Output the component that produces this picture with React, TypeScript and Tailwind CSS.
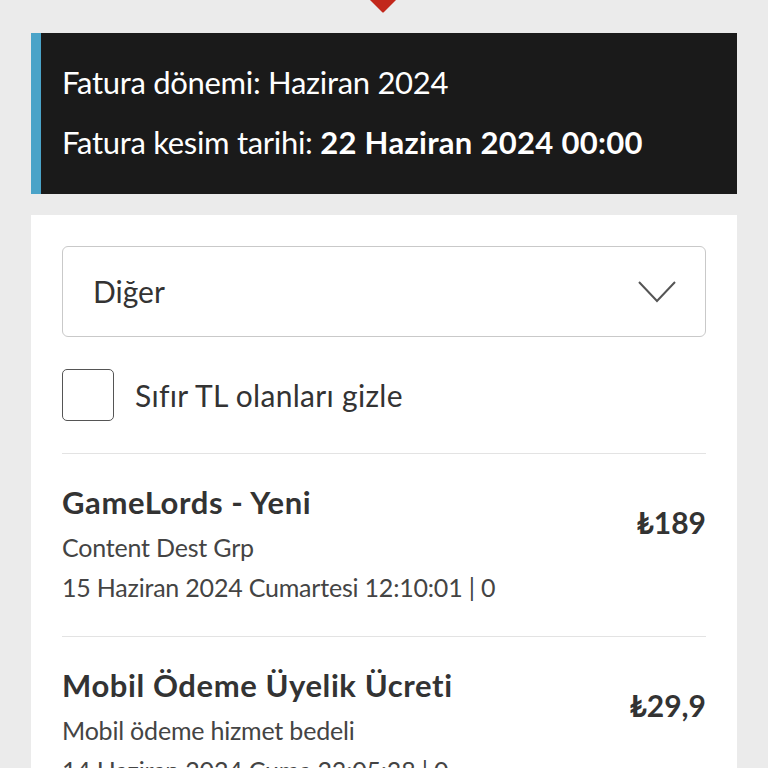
const items = [
  {
    title: "GameLords - Yeni",
    vendor: "Content Dest Grp",
    date: "15 Haziran 2024 Cumartesi 12:10:01 | 0",
    price: "₺189",
  },
  {
    title: "Mobil Ödeme Üyelik Ücreti",
    vendor: "Mobil ödeme hizmet bedeli",
    date: "14 Haziran 2024 Cuma 23:05:38 | 0",
    price: "₺29,9",
  },
];

function Chevron() {
  return (
    <svg width="38" height="22" viewBox="0 0 38 22" fill="none">
      <path d="M1 1 L19 20 L37 1" stroke="#555" strokeWidth="2" />
    </svg>
  );
}

export default function App() {
  return (
    <div
      className="h-[768px] overflow-hidden bg-[#ebebeb] px-[31px]"
      style={{ fontFamily: "Lato, 'Noto Sans', sans-serif" }}
    >
      <div className="flex h-[33px] justify-center">
        <svg width="26" height="13" viewBox="0 0 26 13" className="ml-[-2px]">
          <path d="M0 0 H26 L14 12 Q13 13 12 12 Z" fill="#c2271b" />
        </svg>
      </div>

      <div className="flex h-[161px] bg-[#1a1a1a]">
        <div className="w-[10px] bg-[#4aa3c8]" />
        <div className="flex flex-col justify-center pl-[21px] pt-[-2px] text-[31px] leading-[60px] tracking-[-0.3px] text-white">
          <p className="-mt-[3px]">Fatura dönemi: Haziran 2024</p>
          <p>
            Fatura kesim tarihi: <span className="font-bold tracking-[0.3px]">22 Haziran 2024 00:00</span>
          </p>
        </div>
      </div>

      <div className="mt-[21px] bg-white px-[31px] pt-[31px]">
        <div className="flex h-[91px] items-center justify-between rounded-[6px] border border-[#c9c9c9] pl-[30px] pr-[29px]">
          <span className="text-[30px] text-[#333]">Diğer</span>
          <Chevron />
        </div>

        <label className="mt-[32px] flex items-center gap-[21px]">
          <span className="h-[52px] w-[52px] rounded-[5px] border-[1.5px] border-[#555]" />
          <span className="text-[30px] tracking-[0.3px] text-[#333]">Sıfır TL olanları gizle</span>
        </label>

        <div className="mt-[32px]">
          {items.map((it) => (
            <div key={it.title} className="flex justify-between border-t border-[#e3e3e3] pb-[29px] pt-[30px]">
              <div>
                <p className="text-[31px] font-bold leading-[36px] tracking-[0.6px] text-[#333]">{it.title}</p>
                <p className="mt-[7px] text-[25px] leading-[40px] tracking-[-0.2px] text-[#444]">{it.vendor}</p>
                <p className="text-[25px] leading-[40px] tracking-[-0.2px] text-[#444]">{it.date}</p>
              </div>
              <p className="mt-[18px] text-[30px] font-bold leading-[40px] text-[#333]">{it.price}</p>
            </div>
          ))}
        </div>
      </div>
    </div>
  );
}
